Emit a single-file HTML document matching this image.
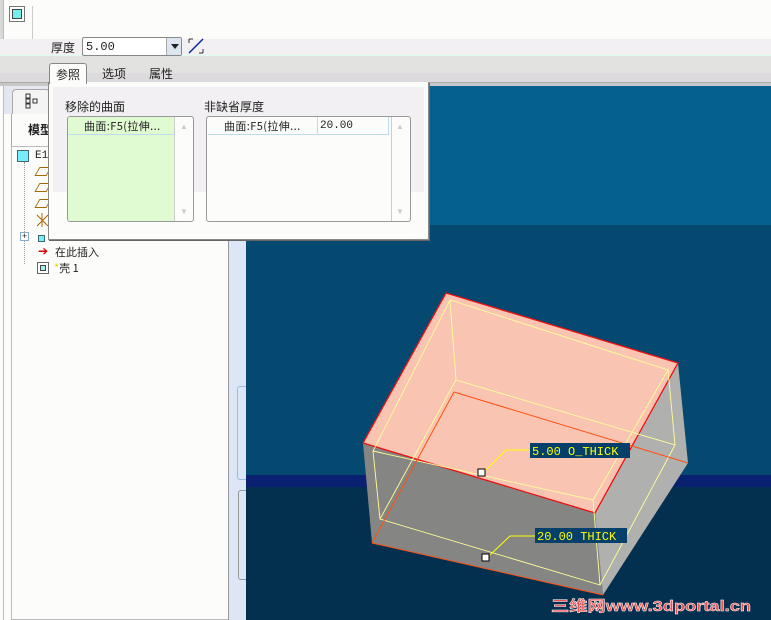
<!DOCTYPE html>
<html><head><meta charset="utf-8"><style>
*{margin:0;padding:0;box-sizing:border-box}
body{width:771px;height:620px;overflow:hidden;position:relative;background:#fcfdfb;font-family:"Liberation Sans","Noto Sans CJK SC",sans-serif;font-size:12px;color:#222}
.a{position:absolute}
.cj{font-family:"Noto Sans CJK SC","WenQuanYi Zen Hei",sans-serif;font-size:11px}
.mono{font-family:"Liberation Mono",monospace;font-size:11px}
</style></head><body>
<!-- toolbar -->
<div class="a" style="left:0;top:0;width:771px;height:39px;background:#fcfdfb"></div>
<div class="a" style="left:0;top:0;width:4px;height:86px;background:#d8d8d8;border-right:1px solid #bbb"></div>
<div class="a" style="left:9px;top:6px;width:16px;height:16px;border:1px solid #777;background:#fff"><div style="margin:2px;width:10px;height:10px;border:1px solid #444;background:#7ee"></div></div>
<div class="a" style="left:32px;top:6px;width:1px;height:70px;background:#ccc"></div>
<div class="a" style="left:0;top:39px;width:771px;height:17px;background:#f2f0f2;border-bottom:1px dotted #dfe"></div>
<div class="a" style="left:0;top:56px;width:771px;height:17px;background:#e2e2e0"></div>
<div class="a" style="left:0;top:73px;width:771px;height:9px;background:#dcdadc"></div>
<div class="a" style="left:0;top:82px;width:771px;height:4px;background:#c8c8c8;border-top:1px solid #aaa"></div>
<div class="a cj" style="left:51px;top:39px;font-size:12px">厚度</div>
<div class="a mono" style="left:82px;top:37px;width:100px;height:19px;border:1px solid #888;border-radius:2px;background:#fff;padding:2px 0 0 3px;font-size:12px">5.00</div>
<div class="a" style="left:166px;top:38px;width:15px;height:17px;background:#dde6f0;border-left:1px solid #aaa"><div style="margin:6px 0 0 4px;border-left:4px solid transparent;border-right:4px solid transparent;border-top:5px solid #222;width:0"></div></div>
<svg class="a" style="left:187px;top:37px" width="18" height="18"><line x1="2" y1="16" x2="16" y2="2" stroke="#0a2a9a" stroke-width="1.5"/><path d="M2 2h4M2 2v4M16 16h-4M16 16v-4" stroke="#333"/></svg>
<!-- left panel -->
<div class="a" style="left:0;top:86px;width:228px;height:534px;background:#fcfdfb"></div>
<div class="a" style="left:3px;top:86px;width:1px;height:534px;background:#bbb"></div>
<div class="a" style="left:11px;top:86px;width:1px;height:534px;background:#aaa"></div>
<div class="a" style="left:4px;top:86px;width:224px;height:28px;background:#e4e6f0"></div>
<div class="a" style="left:12px;top:89px;width:38px;height:25px;background:#f4f4f4;border:1px solid #aaa;border-bottom:none;border-radius:4px 4px 0 0"></div>
<svg class="a" style="left:25px;top:93px" width="14" height="16"><rect x="1" y="1" width="4" height="4" fill="none" stroke="#333"/><rect x="1" y="6" width="4" height="4" fill="none" stroke="#333"/><rect x="8" y="6" width="4" height="4" fill="none" stroke="#333"/><rect x="1" y="11" width="4" height="4" fill="none" stroke="#333"/></svg>
<div class="a cj" style="left:28px;top:121px;font-weight:bold;font-size:12px">模型</div>
<div class="a" style="left:11px;top:146px;width:217px;height:474px;border:1px solid #bbb;border-right:none;background:#fcfdfb"></div>
<div class="a" style="left:17px;top:150px;width:12px;height:12px;background:#7ef;border:1px solid #466"></div>
<div class="a mono" style="left:35px;top:150px">E1.</div>
<div class="a" style="left:24px;top:162px;width:1px;height:102px;border-left:1px dotted #999"></div>
<div class="a" style="left:37px;top:167px;width:12px;height:9px;border:1.5px solid #a60;transform:skewX(-30deg)"></div>
<div class="a" style="left:37px;top:183px;width:12px;height:9px;border:1.5px solid #a60;transform:skewX(-30deg)"></div>
<div class="a" style="left:37px;top:199px;width:12px;height:9px;border:1.5px solid #a60;transform:skewX(-30deg)"></div>
<svg class="a" style="left:36px;top:212px" width="13" height="16"><path d="M1 3L12 14M12 3L1 14M6 1v14" stroke="#a60" fill="none"/></svg>
<div class="a" style="left:20px;top:232px;width:9px;height:9px;border:1px solid #8ac;background:#fff;font-size:9px;line-height:7px;text-align:center">+</div>
<div class="a" style="left:38px;top:235px;width:7px;height:7px;background:#7ef;border:1px solid #466"></div>
<div class="a" style="left:38px;top:247px;width:10px;height:8px;color:#d00;font-size:12px;line-height:8px">➔</div>
<div class="a cj" style="left:55px;top:244px">在此插入</div>
<div class="a" style="left:37px;top:262px;width:12px;height:12px;border:1px solid #666;background:#fff"><div style="margin:2px;width:6px;height:6px;border:1px solid #444;background:#aee"></div></div>
<div class="a cj" style="left:54px;top:260px"><span style="color:#dd0">*</span>壳 1</div>
<!-- separator strip -->
<div class="a" style="left:228px;top:86px;width:18px;height:534px;background:#dce6f6;border-left:1px solid #999"></div>
<div class="a" style="left:237px;top:386px;width:9px;height:94px;border:1px solid #9bd;border-right:none;border-radius:3px 0 0 3px"></div>
<div class="a" style="left:238px;top:490px;width:8px;height:90px;border:1px solid #999;border-right:none;border-radius:3px 0 0 3px"></div>
<!-- viewport -->
<svg class="a" style="left:246px;top:86px" width="525" height="534" viewBox="246 86 525 534">
<rect x="246" y="86" width="525" height="139" fill="#056090"/>
<rect x="246" y="225" width="525" height="250" fill="#054870"/>
<rect x="246" y="475" width="525" height="12" fill="#0a2070"/>
<rect x="246" y="487" width="525" height="133" fill="#043050"/>
<polygon points="363,443 595,513 603,595 372,543" fill="#858583"/>
<polygon points="678,363 688,463 603,595 595,513" fill="#b0b0ae"/>
<polygon points="446,293 678,363 595,513 363,443" fill="#f9c5b2"/>
<polyline points="363,443 446,293 678,363 595,513 363,443" fill="none" stroke="#f01010" stroke-width="1.3"/>
<g stroke="#ffff99" fill="none" stroke-width="0.9">
<polygon points="450,300 668,370 593,500 373,451"/>
<polygon points="456,380 675,445 600,585 380,519"/>
<line x1="450" y1="300" x2="456" y2="380"/><line x1="668" y1="370" x2="675" y2="445"/>
<line x1="593" y1="500" x2="600" y2="585"/><line x1="373" y1="451" x2="380" y2="519"/>
</g>
<g stroke="#ff5010" fill="none" stroke-width="1">
<line x1="454" y1="392" x2="688" y2="463"/><line x1="454" y1="392" x2="372" y2="543"/>
<line x1="372" y1="543" x2="603" y2="595"/>
</g>
<polyline points="486,470 506,450 530,450" stroke="#ff0" fill="none"/>
<polyline points="490,555 510,536 535,536" stroke="#ff0" fill="none"/>
<rect x="530" y="443" width="100" height="15" fill="#05406a"/>
<text x="532" y="455" fill="#ff0" font-family="Liberation Mono" font-size="12">5.00 O_THICK</text>
<rect x="535" y="528" width="92" height="15" fill="#05406a"/>
<text x="537" y="540" fill="#ff0" font-family="Liberation Mono" font-size="12">20.00 THICK</text>
<rect x="478" y="469" width="7" height="7" fill="#fff" stroke="#000"/>
<rect x="482" y="554" width="7" height="7" fill="#fff" stroke="#000"/>
<text x="551" y="611" fill="#f05050" stroke="#fff" stroke-width="0.5" font-family="Noto Sans CJK SC" font-size="15" font-weight="bold" textLength="200" lengthAdjust="spacingAndGlyphs">三维网<tspan font-family="Liberation Sans">www.3dportal.cn</tspan></text>
</svg>
<!-- popup -->
<div class="a" style="left:48px;top:82px;width:381px;height:158px;background:#fcfdfb;border:1px solid #888;border-top:none;box-shadow:1px 1px 0 #666"></div>
<div class="a" style="left:53px;top:87px;width:371px;height:105px;background:#f2f0f2"></div>
<div class="a cj" style="left:49px;top:63px;width:38px;height:21px;background:#fcfdfb;border:1px solid #888;border-bottom:none;border-radius:3px 3px 0 0;text-align:center;font-size:12px;padding-top:2px">参照</div>
<div class="a cj" style="left:102px;top:65px;font-size:12px">选项</div>
<div class="a cj" style="left:149px;top:65px;font-size:12px">属性</div>
<div class="a cj" style="left:65px;top:98px;font-size:12px">移除的曲面</div>
<div class="a cj" style="left:204px;top:98px;font-size:12px">非缺省厚度</div>
<div class="a" style="left:67px;top:116px;width:127px;height:106px;border:1px solid #999;border-radius:3px;background:#fcfdfb;overflow:hidden">
 <div style="position:absolute;left:0;top:0;width:107px;height:104px;background:#e0fbd2;border-right:1px solid #ccc"></div>
 <div style="position:absolute;left:0;top:17px;width:107px;height:1px;background:#bde"></div>
 <div class="cj" style="position:absolute;left:16px;top:1px;letter-spacing:0.4px">曲面:F5(拉伸...</div>
 <div style="position:absolute;left:112px;top:5px;color:#ccc;font-size:8px">▲</div>
 <div style="position:absolute;left:112px;top:90px;color:#ccc;font-size:8px">▼</div>
</div>
<div class="a" style="left:206px;top:116px;width:205px;height:106px;border:1px solid #999;border-radius:3px;background:#fcfdfb;overflow:hidden">
 <div style="position:absolute;left:184px;top:0;width:1px;height:104px;background:#ccc"></div>
 <div style="position:absolute;left:1px;top:17px;width:181px;height:1px;background:#bde"></div>
 <div style="position:absolute;left:110px;top:0;width:1px;height:17px;background:#bde"></div>
 <div style="position:absolute;left:181px;top:0;width:1px;height:17px;background:#bde"></div>
 <div class="cj" style="position:absolute;left:17px;top:1px;letter-spacing:0.4px">曲面:F5(拉伸...</div>
 <div class="mono" style="position:absolute;left:113px;top:3px">20.00</div>
 <div style="position:absolute;left:189px;top:5px;color:#ccc;font-size:8px">▲</div>
 <div style="position:absolute;left:189px;top:90px;color:#ccc;font-size:8px">▼</div>
</div>
</body></html>
